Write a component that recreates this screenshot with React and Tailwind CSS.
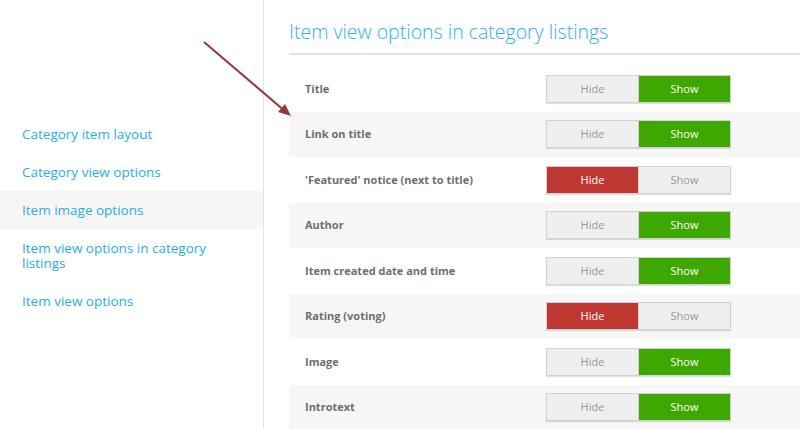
import React from "react";

const rows = [
  { label: "Title", show: true },
  { label: "Link on title", show: true },
  { label: "'Featured' notice (next to title)", show: false },
  { label: "Author", show: true },
  { label: "Item created date and time", show: true },
  { label: "Rating (voting)", show: false },
  { label: "Image", show: true },
  { label: "Introtext", show: true },
];

const nav = [
  { label: "Category item layout" },
  { label: "Category view options" },
  { label: "Item image options", active: true },
  { label: "Item view options in category listings" },
  { label: "Item view options" },
];

function Toggle({ show }) {
  return (
    <div className="flex w-[185px] h-[28px] border border-[#d2d2d2] shadow-[0_1px_1px_rgba(0,0,0,0.12)] text-[11px]">
      <div
        className={
          "flex-1 flex items-center justify-center " +
          (show ? "bg-[#eeefef] text-[#9a9a9a]" : "bg-[#bf3731] text-white")
        }
      >
        Hide
      </div>
      <div
        className={
          "flex-1 flex items-center justify-center border-l border-[#d2d2d2] " +
          (show ? "bg-[#3fa800] text-white" : "bg-[#eeefef] text-[#9a9a9a]")
        }
      >
        Show
      </div>
    </div>
  );
}

export default function App() {
  return (
    <div
      className="relative flex h-[429px] w-[800px] overflow-hidden bg-white"
      style={{ fontFamily: '"Open Sans", "Noto Sans", sans-serif' }}
    >
      <div className="w-[264px] shrink-0 border-r border-[#e4e4e4] pt-[115px]">
        {nav.map((n) => (
          <div
            key={n.label}
            className={
              "pl-[22px] pr-[40px] py-[11.5px] text-[13.5px] leading-[15px] text-[#27aee6] " +
              (n.active ? "bg-[#f6f6f6]" : "")
            }
          >
            {n.label}
          </div>
        ))}
      </div>
      <div className="flex-1 pl-[25px]">
        <div className="pt-[20px] pb-[8.5px] border-b-2 border-[#e2e2e2]">
          <h1 className="text-[19.5px] leading-[24px] font-light text-[#2db2ea]">
            Item view options in category listings
          </h1>
        </div>
        <div className="pt-[11.5px]">
          {rows.map((r, i) => (
            <div
              key={r.label}
              className={
                "flex items-center h-[45.5px] pl-[16px] " +
                (i % 2 === 1 ? "bg-[#f6f6f6]" : "")
              }
            >
              <div className="w-[241px] text-[11px] font-bold text-[#6e6e6e]">
                {r.label}
              </div>
              <Toggle show={r.show} />
            </div>
          ))}
        </div>
      </div>
      <svg
        className="absolute left-0 top-0 pointer-events-none"
        width="800"
        height="429"
      >
        <line x1="204" y1="42" x2="286" y2="112" stroke="#93393a" strokeWidth="2" />
        <polygon points="291,116 278,112 285,104" fill="#93393a" />
      </svg>
    </div>
  );
}
